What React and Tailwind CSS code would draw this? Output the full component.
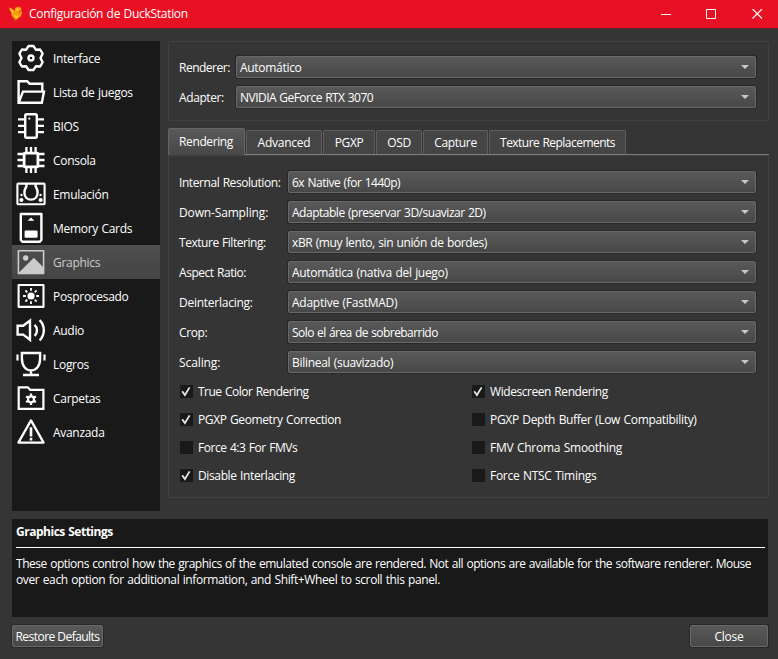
import React from "react";
import clsx from "clsx";

const Icon = ({ children }) => (
  <svg
    className="h-8 w-8 shrink-0"
    viewBox="0 0 32 32"
    fill="none"
    stroke="currentColor"
    strokeWidth="2.4"
    strokeLinejoin="round"
  >
    {children}
  </svg>
);

const icons = {
  gear: (
    <Icon>
      <path d="M13.6 4h4.8l2.4 3.7 4.3-.2 2.5 4.2-2.1 4.3 2.1 4.3-2.5 4.2-4.3-.2-2.4 3.7h-4.8l-2.4-3.7-4.3.2-2.5-4.2L6.5 16l-2.1-4.3 2.5-4.2 4.3.2z" />
      <circle cx="16" cy="16" r="2.5" />
    </Icon>
  ),
  folderOpen: (
    <Icon>
      <path d="M27.3 14.5V7.8H14.6l-2.4-2.6H3.6v21.6h23.2l2.2-11.2H8L3.8 26.4" strokeLinejoin="miter" />
    </Icon>
  ),
  chip: (
    <Icon>
      <rect x="10.2" y="4.2" width="11.6" height="23.6" rx="1.5" />
      <path d="M3 9.3h7M3 15.8h7M3 22.2h7M22 9.3h7M22 15.8h7M22 22.2h7" strokeWidth="2.2" />
      <circle cx="14.3" cy="8.6" r="1.1" fill="currentColor" stroke="none" />
    </Icon>
  ),
  cpu: (
    <Icon>
      <rect x="9.1" y="9.1" width="13.8" height="13.8" rx="1" strokeWidth="2.8" />
      <path d="M11.4 3v6M16 3v6M20.6 3v6M11.4 23v6M16 23v6M20.6 23v6M2.5 10h6M2.5 16h6M2.5 22h6M23.5 10h6M23.5 16h6M23.5 22h6" strokeWidth="2.3" />
    </Icon>
  ),
  emulation: (
    <Icon>
      <rect x="2.4" y="5.6" width="27.2" height="20.6" rx=".8" strokeWidth="2.1" />
      <path d="M11.4 6v2c0 1.4-2 2.6-2 6.4 0 4.4 2.8 7.2 6.6 7.2s6.6-2.8 6.6-7.2c0-3.8-2-5-2-6.4V6" strokeWidth="2.4" />
      <circle cx="6.4" cy="22" r="2.1" fill="currentColor" stroke="none" />
      <circle cx="25.6" cy="22" r="2.1" fill="currentColor" stroke="none" />
      <circle cx="6.5" cy="17" r="1.2" fill="currentColor" stroke="none" />
      <circle cx="25.5" cy="17" r="1.2" fill="currentColor" stroke="none" />
    </Icon>
  ),
  memoryCard: (
    <Icon>
      <path d="M5.8 2h20.6v26l-1.8 1.8H7.6L5.8 28z" strokeWidth="2.4" />
      <path d="M16 5.4l3.4 3.4h-6.8z" fill="currentColor" stroke="none" />
      <rect x="9.6" y="18.6" width="13" height="7.2" rx="1.2" fill="currentColor" stroke="none" />
    </Icon>
  ),
  image: (
    <Icon>
      <rect x="3.4" y="4.8" width="25.2" height="22.6" strokeWidth="1.6" />
      <circle cx="10.7" cy="12" r="2.7" fill="currentColor" stroke="none" />
      <path d="M4 26.6L18.8 11.8 28.6 21.6v5.6H4z" fill="currentColor" stroke="none" />
    </Icon>
  ),
  sun: (
    <Icon>
      <rect x="3.6" y="5" width="24.9" height="21.9" strokeWidth="2.1" />
      <circle cx="16" cy="16" r="3.6" fill="currentColor" stroke="none" />
      <path d="M16 8v2.8M16 21.2V24M8 16h2.8M21.2 16H24M10.4 10.4l1.9 1.9M19.7 19.7l1.9 1.9M21.6 10.4l-1.9 1.9M12.3 19.7l-1.9 1.9" strokeWidth="1.8" />
    </Icon>
  ),
  audio: (
    <Icon>
      <path d="M2.6 11.8h5.6l6.8-5.2v19.2l-6.8-5.2H2.6z" strokeLinejoin="miter" />
      <path d="M19.6 10.8c3.2 3 3.2 8 0 11M24.6 6.2c5.6 5.4 5.6 14.8 0 20.2" />
    </Icon>
  ),
  trophy: (
    <Icon>
      <path d="M6.9 5h18.2v5.6c0 7-3.6 11.8-9.1 11.8s-9.1-4.8-9.1-11.8zM16 22.4V27M8 27h16" strokeLinejoin="miter" />
      <path d="M2.5 6.4v6M29.5 6.4v6" strokeWidth="2.2" />
    </Icon>
  ),
  folderGear: (
    <Icon>
      <path d="M3.7 5.3h9.2l2.3 2.6h13.2v19H3.7z" strokeLinejoin="miter" strokeWidth="2.2" />
      <circle cx="16" cy="17.3" r="3" strokeWidth="2.2" />
      <path d="M16 11.6v2.4M16 20.6V23M11.1 14.5l2 1.1M18.9 19l2 1.1M20.9 14.5l-2 1.1M13.1 19l-2 1.1" strokeWidth="2.3" />
    </Icon>
  ),
  warning: (
    <Icon>
      <path d="M16 4.4L28.6 26.6H3.4z" strokeWidth="2.3" />
      <path d="M16 11.2v9.2M16 21.8v2.6" strokeWidth="2.6" />
    </Icon>
  ),
};

const sections = [
  { icon: "gear", label: "Interface" },
  { icon: "folderOpen", label: "Lista de juegos" },
  { icon: "chip", label: "BIOS" },
  { icon: "cpu", label: "Consola" },
  { icon: "emulation", label: "Emulación" },
  { icon: "memoryCard", label: "Memory Cards" },
  { icon: "image", label: "Graphics" },
  { icon: "sun", label: "Posprocesado" },
  { icon: "audio", label: "Audio" },
  { icon: "trophy", label: "Logros" },
  { icon: "folderGear", label: "Carpetas" },
  { icon: "warning", label: "Avanzada" },
];

const tabs = [
  { label: "Advanced", className: "w-[76px] tracking-[-0.25px]" },
  { label: "PGXP", className: "w-[52px] tracking-[-0.35px]" },
  { label: "OSD", className: "w-[46px] tracking-[-0.4px]" },
  { label: "Capture", className: "w-[65px]" },
  { label: "Texture Replacements", className: "w-[137px] tracking-[-0.54px]" },
];

// label, label tracking, value, value tracking
const options = [
  ["Internal Resolution:", "tracking-[-0.43px]", "6x Native (for 1440p)", "tracking-[-0.49px]"],
  ["Down-Sampling:", "tracking-[-0.15px]", "Adaptable (preservar 3D/suavizar 2D)", "tracking-[-0.48px]"],
  ["Texture Filtering:", "tracking-[-0.46px]", "xBR (muy lento, sin unión de bordes)", "tracking-[-0.4px]"],
  ["Aspect Ratio:", "tracking-[-0.46px]", "Automática (nativa del juego)", "tracking-[-0.3px]"],
  ["Deinterlacing:", "tracking-[-0.25px]", "Adaptive (FastMAD)", "tracking-[-0.25px]"],
  ["Crop:", "tracking-[-0.4px]", "Solo el área de sobrebarrido", "tracking-[-0.56px]"],
  ["Scaling:", "tracking-[-0.1px]", "Bilineal (suavizado)", "tracking-[-0.3px]"],
];

const checks = [
  ["True Color Rendering", true, "tracking-[-0.5px]"],
  ["Widescreen Rendering", true, "tracking-[-0.44px]"],
  ["PGXP Geometry Correction", true, "tracking-[-0.39px]"],
  ["PGXP Depth Buffer (Low Compatibility)", false, "tracking-[-0.32px]"],
  ["Force 4:3 For FMVs", false, "tracking-[-0.45px]"],
  ["FMV Chroma Smoothing", false, "tracking-[-0.26px]"],
  ["Disable Interlacing", true, "tracking-[-0.37px]"],
  ["Force NTSC Timings", false, "tracking-[-0.29px]"],
];

const Combo = ({ value, className }) => (
  <div className="flex h-[22px] flex-1 items-center justify-between rounded-[2px] border border-[#686868] bg-linear-to-b from-[#595959] to-[#484848] pr-[6px] pl-[3px] shadow-[0_0_0_1px_#292929]">
    <span className={clsx("pt-px", className)}>{value}</span>
    <svg className="h-1 w-2" viewBox="0 0 8 4">
      <path d="M0 0h8L4 4z" fill="#c8c8c8" />
    </svg>
  </div>
);

const Row = ({ label, labelClass, value, valueClass }) => (
  <div className="flex h-[22px] items-center">
    <span className={clsx("shrink-0 pt-0.5", labelClass)}>{label}</span>
    <Combo value={value} className={valueClass} />
  </div>
);

const Check = ({ label, checked, className }) => (
  <div className="flex h-7 items-center gap-[5px]">
    <span className="flex h-[13px] w-[13px] items-center justify-center bg-[#191919]">
      {checked && (
        <svg className="h-[13px] w-[13px]" viewBox="0 0 13 13" fill="none" stroke="#e6e6e6" strokeWidth="1.8">
          <path d="M2.2 6.2L4.9 10 9.6 2.4" />
        </svg>
      )}
    </span>
    <span className={clsx("pt-0.5", className)}>{label}</span>
  </div>
);

const Button = ({ children, className }) => (
  <button
    className={clsx(
      "flex h-[22px] items-center justify-center rounded-[2px] border border-[#686868] bg-linear-to-b from-[#595959] to-[#484848] pt-px whitespace-nowrap shadow-[0_0_0_1px_#292929]",
      className
    )}
  >
    {children}
  </button>
);

const TitleBar = () => (
  <div className="flex h-[29px] items-center border-b border-[#5a2a2c] bg-[#e81123] pl-2">
    <svg className="h-4 w-4" viewBox="0 0 16 16">
      <path d="M1 1.5l3 1 2.5 2.5L7 2l3-1.5L13.5 2l-.5 3 1.2 1-1.2 4-3 2.5L8 14l-2.5-2L3 8.500l.8-2L2 5z" fill="#f59a12" />
      <path d="M2 2.500l3 2 1 3-2.500-1zM8 3l2-1 1 2-2 1zM6 9l3 1 2-1-2 3-2-.5z" fill="#ffd21f" />
      <path d="M5.500 13.500h3l.5 1.500H5zM11 5l2 .5-2 1.500z" fill="#b5520c" />
    </svg>
    <span className="ml-[5px] flex-1 tracking-[-0.3px]">Configuración de DuckStation</span>
    <div className="flex items-center pr-[15px] text-white">
      <svg className="h-[11px] w-[11px]" viewBox="0 0 11 11">
        <path d="M0 5.5h10" stroke="currentColor" />
      </svg>
      <svg className="ml-[34px] h-[11px] w-[11px]" viewBox="0 0 11 11" fill="none">
        <path d="M.5 .5h9v9h-9z" stroke="currentColor" />
      </svg>
      <svg className="ml-[35px] h-[11px] w-[11px]" viewBox="0 0 11 11" fill="none">
        <path d="M.5 0l9.5 9.5M10 0L.5 9.5" stroke="currentColor" strokeWidth="1.1" />
      </svg>
    </div>
  </div>
);

const App = () => {
  return (
    <div className="flex h-[659px] w-[778px] flex-col overflow-hidden bg-[#353535] font-['Open_Sans','Noto_Sans',sans-serif] text-xs/4 tracking-[-0.3px] text-white [word-spacing:0.7px]">
      <TitleBar />
      <div className="flex flex-1 flex-col pt-3 pr-[9px] pl-3">
        <div className="flex h-[470px] gap-2">
          <div className="w-[148px] shrink-0 bg-[#191919]">
            {sections.map(({ icon, label }) => (
              <div
                key={label}
                className={clsx(
                  "flex h-[34px] items-center gap-[6px] pl-[3px]",
                  icon === "image" && "bg-linear-to-b from-[#4e4e4e] to-[#454545] text-[#cbcbcb]"
                )}
              >
                {icons[icon]}
                <span className="pt-0.5">{label}</span>
              </div>
            ))}
          </div>

          <div className="flex-1">
            <div className="flex h-[80px] flex-col gap-2 rounded-[2px] border border-[#414141] pt-[14px] pr-3 pl-[10px]">
              <Row label="Renderer:" labelClass="w-[57px] tracking-[-0.5px]" value="Automático" />
              <Row
                label="Adapter:"
                labelClass="w-[57px] tracking-[-0.4px]"
                value="NVIDIA GeForce RTX 3070"
                valueClass="tracking-[-0.53px]"
              />
            </div>

            <div className="mt-[7px] flex h-[27px] items-end">
              <div className="flex h-[27px] w-[77px] items-center justify-center rounded-t-[2px] border border-b-0 border-[#666] bg-linear-to-b from-[#595959] to-[#484848] pr-px tracking-[-0.4px]">
                Rendering
              </div>
              <div className="flex h-[25px] flex-1 items-end gap-px border-b border-[#7c7c7c] pl-px">
                {tabs.map(({ label, className }) => (
                  <div
                    key={label}
                    className={clsx(
                      "flex h-6 items-center justify-center rounded-t-[2px] border border-b-0 border-[#5e5e5e] bg-[#454545] pt-px whitespace-nowrap",
                      className
                    )}
                  >
                    {label}
                  </div>
                ))}
              </div>
            </div>

            <div className="h-[343px] rounded-b-[2px] border border-[#414141] pt-[15px] pr-3 pl-[10px]">
              <div className="flex flex-col gap-2">
                {options.map(([label, labelClass, value, valueClass]) => (
                  <Row
                    key={label}
                    label={label}
                    labelClass={clsx("w-[109px]", labelClass)}
                    value={value}
                    valueClass={valueClass}
                  />
                ))}
              </div>
              <div className="mt-1 grid grid-cols-[292px_1fr] pl-px">
                {checks.map(([label, checked, className]) => (
                  <Check key={label} label={label} checked={checked} className={className} />
                ))}
              </div>
            </div>
          </div>
        </div>

        <div className="mt-2 mr-px h-[98px] bg-[#191919] pt-[5px] pr-[3px] pl-1">
          <div className="font-bold tracking-[-0.48px]">Graphics Settings</div>
          <div className="mt-[7px] border-t border-white" />
          <p className="mt-2 whitespace-nowrap">
            <span className="tracking-[-0.475px]">
              These options control how the graphics of the emulated console are rendered. Not all options are available for the software renderer. Mouse
            </span>
            <br />
            <span className="tracking-[-0.385px]">
              over each option for additional information, and Shift+Wheel to scroll this panel.
            </span>
          </p>
        </div>

        <div className="mt-2 mr-px flex justify-between">
          <Button className="w-[91px] tracking-[-0.54px]">Restore Defaults</Button>
          <Button className="w-[78px]">Close</Button>
        </div>
      </div>
    </div>
  );
};

export default App;
